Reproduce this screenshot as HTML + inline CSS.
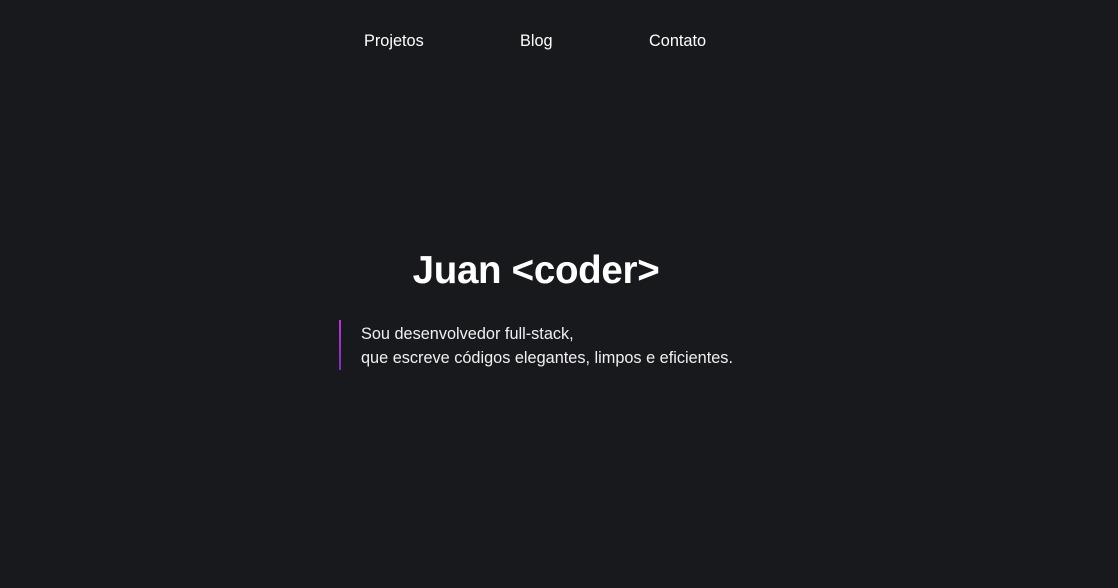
<!DOCTYPE html>
<html><head><style>
html,body{margin:0;padding:0;width:1118px;height:588px;background:#18191d;overflow:hidden;font-family:"Liberation Sans",sans-serif;color:#fff}
.nav a{position:absolute;top:32px;font-size:16.3px;color:#fff;text-decoration:none}
h1{position:absolute;left:0;width:1072px;text-align:center;top:249px;margin:0;font-size:38.5px;font-weight:bold;letter-spacing:-0.3px}
.bar{position:absolute;left:339px;top:320px;width:2px;height:50px;background:linear-gradient(#c72fe0,#7b2fb8)}
.p{position:absolute;left:361px;top:322px;font-size:16.3px;line-height:24px;color:#f0f0f0}
</style></head><body>
<div class="nav"><a style="left:364px">Projetos</a><a style="left:520px">Blog</a><a style="left:649px">Contato</a></div>
<h1>Juan &lt;coder&gt;</h1>
<div class="bar"></div>
<div class="p">Sou desenvolvedor full-stack,<br>que escreve códigos elegantes, limpos e eficientes.</div>
</body></html>
